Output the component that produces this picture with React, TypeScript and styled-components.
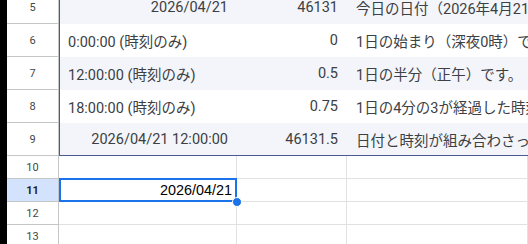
import { createGlobalStyle, styled } from 'styled-components';

const GlobalStyle = createGlobalStyle`
  html, body {
    margin: 0;
    padding: 0;
    background: #ffffff;
    overflow: hidden;
  }
  * {
    box-sizing: border-box;
  }
`;

interface ITableRow {
  num: number;
  value: string;
  align: 'left' | 'right';
  serial: string;
  note: string;
}

const tableRows: ITableRow[] = [
  { num: 5, value: '2026/04/21', align: 'right', serial: '46131', note: '今日の日付（2026年4月21日）です。' },
  { num: 6, value: '0:00:00 (時刻のみ)', align: 'left', serial: '0', note: '1日の始まり（深夜0時）です。' },
  { num: 7, value: '12:00:00 (時刻のみ)', align: 'left', serial: '0.5', note: '1日の半分（正午）です。' },
  { num: 8, value: '18:00:00 (時刻のみ)', align: 'left', serial: '0.75', note: '1日の4分の3が経過した時刻（18時）です。' },
  { num: 9, value: '2026/04/21 12:00:00', align: 'right', serial: '46131.5', note: '日付と時刻が組み合わさった値です。' },
];

const plainRows = [10, 11, 12, 13];
const selectedRow = 11;

function App() {
  return (
    <>
      <GlobalStyle />
      <Screen>
        <Strip />
        <Sheet>
          <Scroller>
            {/* 行番号 */}
            <HeaderColumn>
              {tableRows.map((row) => (
                <RowHeader key={row.num} $tall>
                  {row.num}
                </RowHeader>
              ))}
              {plainRows.map((num) => (
                <RowHeader key={num} $active={num === selectedRow}>
                  {num}
                </RowHeader>
              ))}
            </HeaderColumn>

            <Cells>
              {/* テーブル（縞模様） */}
              <Table>
                {tableRows.map((row, index) => (
                  <TableRow key={row.num} $banded={index % 2 === 0}>
                    <TableCell $align={row.align}>{row.value}</TableCell>
                    <TableCell $align="right">{row.serial}</TableCell>
                    <NoteCell>{row.note}</NoteCell>
                  </TableRow>
                ))}
              </Table>

              {plainRows.map((num) => (
                <PlainRow key={num}>
                  <PlainCell $width={178}>
                    {num === selectedRow && (
                      <>
                        <CellText>2026/04/21</CellText>
                        <Selection />
                        <FillHandle />
                      </>
                    )}
                  </PlainCell>
                  <PlainCell $width={110} />
                  <PlainCell />
                </PlainRow>
              ))}
            </Cells>
          </Scroller>
        </Sheet>
      </Screen>
    </>
  );
}

const Screen = styled.div`
  display: flex;
  width: 528px;
  height: 244px;
  overflow: hidden;
  background: #ffffff;
`;

const Strip = styled.div`
  width: 7px;
  flex-shrink: 0;
  background: #000000;
`;

const Sheet = styled.div`
  flex: 1;
  overflow: hidden;
`;

const Scroller = styled.div`
  display: flex;
  margin-top: -9px;
`;

const HeaderColumn = styled.div`
  width: 52px;
  flex-shrink: 0;
  display: flex;
  flex-direction: column;
`;

const RowHeader = styled.div<{ $tall?: boolean; $active?: boolean }>`
  height: ${({ $tall }) => ($tall ? '33px' : '23px')};
  display: flex;
  align-items: center;
  justify-content: center;
  border-right: 1px solid #c4c7c5;
  border-bottom: 1px solid #c4c7c5;
  font-family: Roboto, 'Liberation Sans', sans-serif;
  font-size: 11px;
  font-weight: ${({ $active }) => ($active ? 700 : 400)};
  color: ${({ $active }) => ($active ? '#1f1f1f' : '#444746')};
  background: ${({ $active }) => ($active ? '#d3e3fd' : '#ffffff')};
`;

const Cells = styled.div`
  flex: 1;
  min-width: 0;
  display: flex;
  flex-direction: column;
`;

const Table = styled.div`
  display: flex;
  flex-direction: column;
  border-left: 1px solid #4b5993;
  border-bottom: 1px solid #4b5993;
`;

const TableRow = styled.div<{ $banded: boolean }>`
  height: 33px;
  display: grid;
  grid-template-columns: 177px 110px 1fr;
  background: ${({ $banded }) => ($banded ? '#f3f5fa' : '#ffffff')};

  &:last-child {
    height: 32px;
  }
`;

const TableCell = styled.div<{ $align: 'left' | 'right' }>`
  display: flex;
  align-items: center;
  justify-content: ${({ $align }) => ($align === 'right' ? 'flex-end' : 'flex-start')};
  padding: 0 9px 0 8px;
  font-family: Roboto, 'Noto Sans CJK JP', sans-serif;
  font-size: 14.5px;
  color: #3c4043;
  white-space: nowrap;
  overflow: hidden;
`;

const NoteCell = styled.div`
  display: flex;
  align-items: center;
  padding-left: 9px;
  font-family: Roboto, 'Noto Sans CJK JP', sans-serif;
  font-size: 14.5px;
  color: #3c4043;
  white-space: nowrap;
  overflow: hidden;
`;

const PlainRow = styled.div`
  height: 23px;
  display: flex;
`;

const PlainCell = styled.div<{ $width?: number }>`
  position: relative;
  width: ${({ $width }) => ($width ? `${$width}px` : 'auto')};
  flex: ${({ $width }) => ($width ? 'none' : '1')};
  display: flex;
  align-items: center;
  justify-content: flex-end;
  padding-right: 4px;
  border-right: 1px solid #e1e1e1;
  border-bottom: 1px solid #e1e1e1;
`;

const CellText = styled.span`
  font-family: 'Liberation Sans', Arial, sans-serif;
  font-size: 14.4px;
  color: #000000;
`;

const Selection = styled.div`
  position: absolute;
  top: -1px;
  left: 0;
  right: -1px;
  bottom: -1px;
  border: 2px solid #1a73e8;
  pointer-events: none;
`;

const FillHandle = styled.div`
  position: absolute;
  right: -6px;
  bottom: -6px;
  width: 10px;
  height: 10px;
  border-radius: 50%;
  background: #1a73e8;
  border: 1px solid #ffffff;
  z-index: 2;
`;

export default App;
